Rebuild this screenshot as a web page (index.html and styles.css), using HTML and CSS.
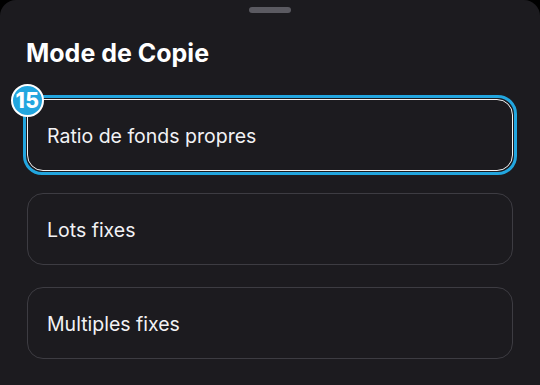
FILE: index.html
```html
<!DOCTYPE html>
<html lang="fr">
<head>
<meta charset="utf-8">
<link rel="stylesheet" href="styles.css">
</head>
<body>
<div class="sheet">
  <div class="handle"></div>
  <h1 class="title">Mode de Copie</h1>
  <div class="options">
    <div class="option option--selected">
      <span class="option-label">Ratio de fonds propres</span>
      <span class="focus-ring"></span>
      <span class="badge">15</span>
    </div>
    <div class="option">
      <span class="option-label">Lots fixes</span>
    </div>
    <div class="option">
      <span class="option-label">Multiples fixes</span>
    </div>
  </div>
</div>
</body>
</html>
```
FILE: styles.css
```css
html, body {
  margin: 0;
  padding: 0;
  background: #000;
}
body {
  width: 540px;
  height: 385px;
  overflow: hidden;
  font-family: Inter, "Noto Sans", sans-serif;
}
.sheet {
  box-sizing: border-box;
  height: 385px;
  background: #1c1b1f;
  border-radius: 16px 16px 0 0;
  padding: 7px 27px 0;
}
.handle {
  width: 42px;
  height: 6px;
  border-radius: 3px;
  background: #5b5a61;
  margin: 0 auto;
}
.title {
  margin: 25px 0 0 -1px;
  font-size: 25px;
  line-height: 30px;
  font-weight: 700;
  color: #ffffff;
}
.options {
  margin-top: 31px;
  display: flex;
  flex-direction: column;
  gap: 22px;
}
.option {
  position: relative;
  box-sizing: border-box;
  height: 72px;
  border: 1.5px solid #3d3c42;
  border-radius: 16px;
  display: flex;
  align-items: center;
  padding-left: 19px;
  padding-top: 1px;
}
.option--selected {
  border-color: #f4f4f4;
}
.option-label {
  font-size: 19.5px;
  font-weight: 400;
  color: #f2f2f4;
}
.focus-ring {
  position: absolute;
  inset: -5px;
  border: 3px solid #22a6df;
  border-radius: 19px;
  pointer-events: none;
}
.badge {
  position: absolute;
  left: -17px;
  top: -16px;
  width: 33px;
  height: 33px;
  box-sizing: border-box;
  border-radius: 50%;
  background: #22a6df;
  border: 2px solid #ffffff;
  color: #ffffff;
  font-size: 21px;
  font-weight: 800;
  display: flex;
  align-items: center;
  justify-content: center;
  letter-spacing: 0.5px;
  line-height: 1;
}
```
